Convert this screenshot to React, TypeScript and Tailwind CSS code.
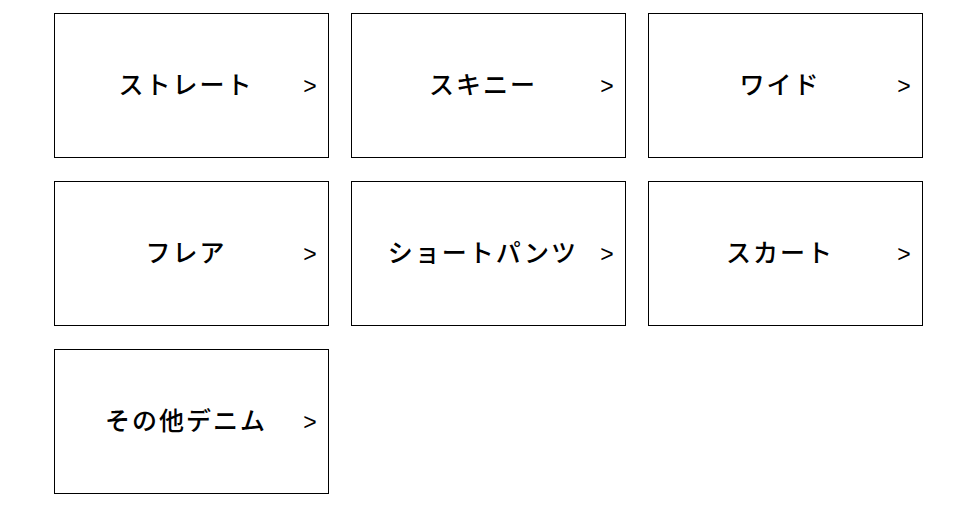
const categories: string[] = [
  "ストレート",
  "スキニー",
  "ワイド",
  "フレア",
  "ショートパンツ",
  "スカート",
  "その他デニム",
];

const CategoryCard = ({ label }: { label: string }) => {
  return (
    <a
      href="#"
      className="flex items-center w-[275px] h-[145px] border border-black bg-white pl-[14px] pr-[11px] text-black"
    >
      <span className="flex-1 text-center text-[25px] font-medium tracking-[2px] leading-none -mt-[4px]">
        {label}
      </span>
      <span className="w-[14px] mt-[1px] text-center text-[23px] font-normal leading-none font-['Liberation_Sans',sans-serif]">
        &gt;
      </span>
    </a>
  );
};

export default function App() {
  return (
    <div className="min-h-screen bg-white font-['Noto_Sans_CJK_JP','Noto_Sans',sans-serif]">
      <div className="grid grid-cols-[275px_275px_275px] gap-x-[22px] gap-y-[23px] pl-[54px] pt-[13px]">
        {categories.map((c) => (
          <CategoryCard key={c} label={c} />
        ))}
      </div>
    </div>
  );
}
